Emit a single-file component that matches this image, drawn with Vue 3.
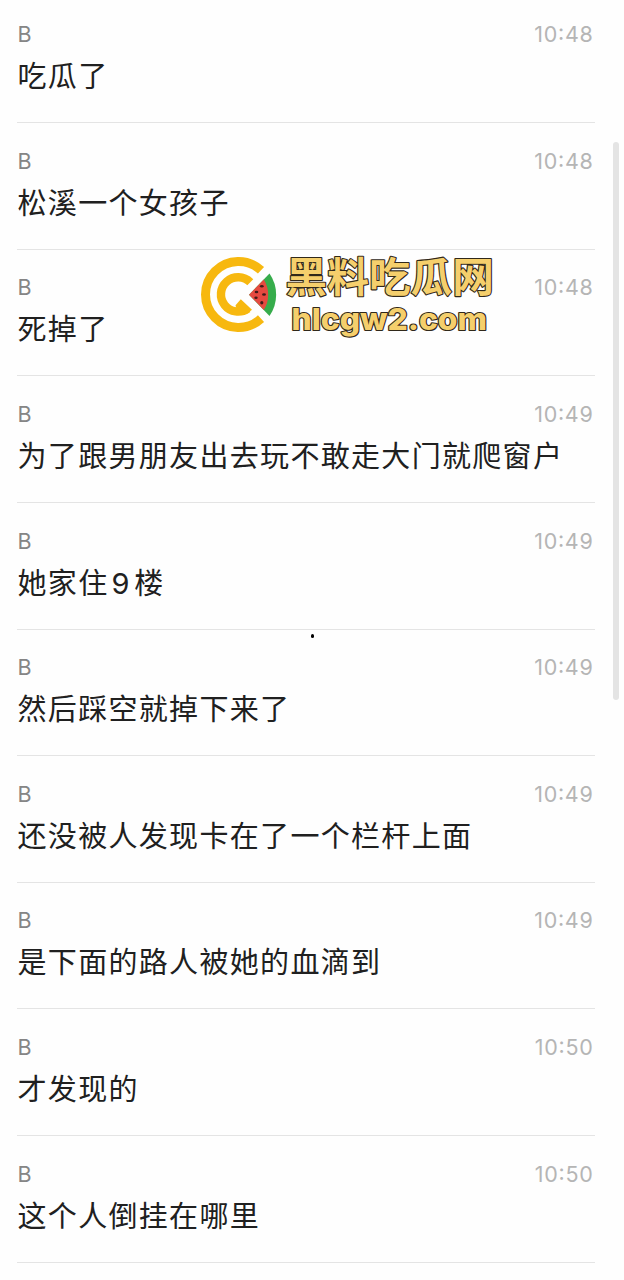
<script setup>
const messages = [
  { time: '10:48', parts: ['吃瓜了'] },
  { time: '10:48', parts: ['松溪一个女孩子'] },
  { time: '10:48', parts: ['死掉了'] },
  { time: '10:49', parts: ['为了跟男朋友出去玩不敢走大门就爬窗户'] },
  { time: '10:49', parts: ['她家住', '9', '楼'] },
  { time: '10:49', parts: ['然后踩空就掉下来了'] },
  { time: '10:49', parts: ['还没被人发现卡在了一个栏杆上面'] },
  { time: '10:49', parts: ['是下面的路人被她的血滴到'] },
  { time: '10:50', parts: ['才发现的'] },
  { time: '10:50', parts: ['这个人倒挂在哪里'] },
]
</script>

<template>
  <main class="page">
    <article v-for="(m, i) in messages" :key="i" class="row">
      <header class="meta">
        <span class="name">B</span>
        <time class="time">{{ m.time }}</time>
      </header>
      <p class="text"><span v-for="(p, k) in m.parts" :key="k" :class="{ digit: k === 1 }">{{ p }}</span></p>
    </article>

    <div class="scrollbar"></div>
    <div class="dot"></div>

    <svg class="watermark" width="304" height="106" viewBox="196 242 304 106">
      <g fill="none" stroke="#f7b80f">
        <path d="M261 270.3A33 33 0 1 0 261 318.6" stroke-width="9" />
        <path d="M250.3 282.2A17.2 17.2 0 1 0 248 308.5" stroke-width="8.4" />
      </g>
      <path d="M240.8 299.3L252 309.7L246.5 314L236.5 309L235.5 305.2Z" fill="#f7b80f" />
      <path d="M249 294.7L269.5 273.5A37.3 37.3 0 0 1 269.5 316Z" fill="#36ac4b" />
      <path d="M249 294.7L263.8 279.4A29 29 0 0 1 263.8 310Z" fill="#e64a40" />
      <g fill="#421a18">
        <ellipse cx="261.8" cy="286.3" rx="1.9" ry="1.3" />
        <ellipse cx="256.5" cy="292" rx="1.8" ry="1.3" />
        <ellipse cx="264" cy="294.5" rx="1.9" ry="1.3" />
        <ellipse cx="256" cy="297.8" rx="1.7" ry="1.3" />
        <ellipse cx="261.8" cy="302.7" rx="1.6" ry="1.8" />
      </g>
      <text class="brand" x="285.5" y="292" textLength="208.5" lengthAdjust="spacingAndGlyphs">黑料吃瓜网</text>
      <text class="site" x="291.5" y="330" textLength="195.5" lengthAdjust="spacingAndGlyphs">hlcgw2.com</text>
    </svg>
  </main>
</template>

<style>
body {
  background: #fefefe;
}
</style>

<style scoped>
.page {
  position: relative;
  box-sizing: border-box;
  width: 624px;
  height: 1280px;
  padding: 0 29px 0 17px;
  overflow: hidden;
  display: grid;
  grid-template-rows: 123px repeat(9, 126.65px);
}
.row {
  display: flex;
  flex-direction: column;
  justify-content: flex-end;
  box-sizing: border-box;
  min-height: 0;
  padding-bottom: 27px;
  border-bottom: 1px solid #e4e4e4;
}
.meta {
  display: flex;
  justify-content: space-between;
  height: 26px;
  padding: 0 1.5px 0 0.6px;
  font: 400 21.5px/26px Inter, "Liberation Sans", sans-serif;
}
.name {
  color: #858585;
}
.time {
  color: #b5b5b5;
  letter-spacing: 0.7px;
  font-feature-settings: "case";
}
.text {
  margin: 6px 0 0 0.5px;
  height: 42px;
  font: 400 29px/42px "Noto Sans CJK SC", sans-serif;
  letter-spacing: 1.32px;
  color: #202020;
  white-space: nowrap;
}
.digit {
  padding: 0 3.5px 0 3px;
  font-family: Inter, sans-serif;
}
.scrollbar {
  position: absolute;
  left: 613px;
  top: 142px;
  width: 6px;
  height: 558px;
  border-radius: 3px;
  background: #e4e4e4;
}
.dot {
  position: absolute;
  left: 311px;
  top: 634px;
  width: 3px;
  height: 4px;
  border-radius: 2px;
  background: #000;
}
.watermark {
  position: absolute;
  left: 196px;
  top: 242px;
}
.brand,
.site {
  fill: #f5cf6c;
  stroke: #30281a;
  stroke-width: 2.2px;
  stroke-linejoin: round;
  paint-order: stroke;
}
.brand {
  font: 700 41px "Noto Sans CJK SC", sans-serif;
}
.site {
  font: 800 30px Inter, sans-serif;
}
</style>
